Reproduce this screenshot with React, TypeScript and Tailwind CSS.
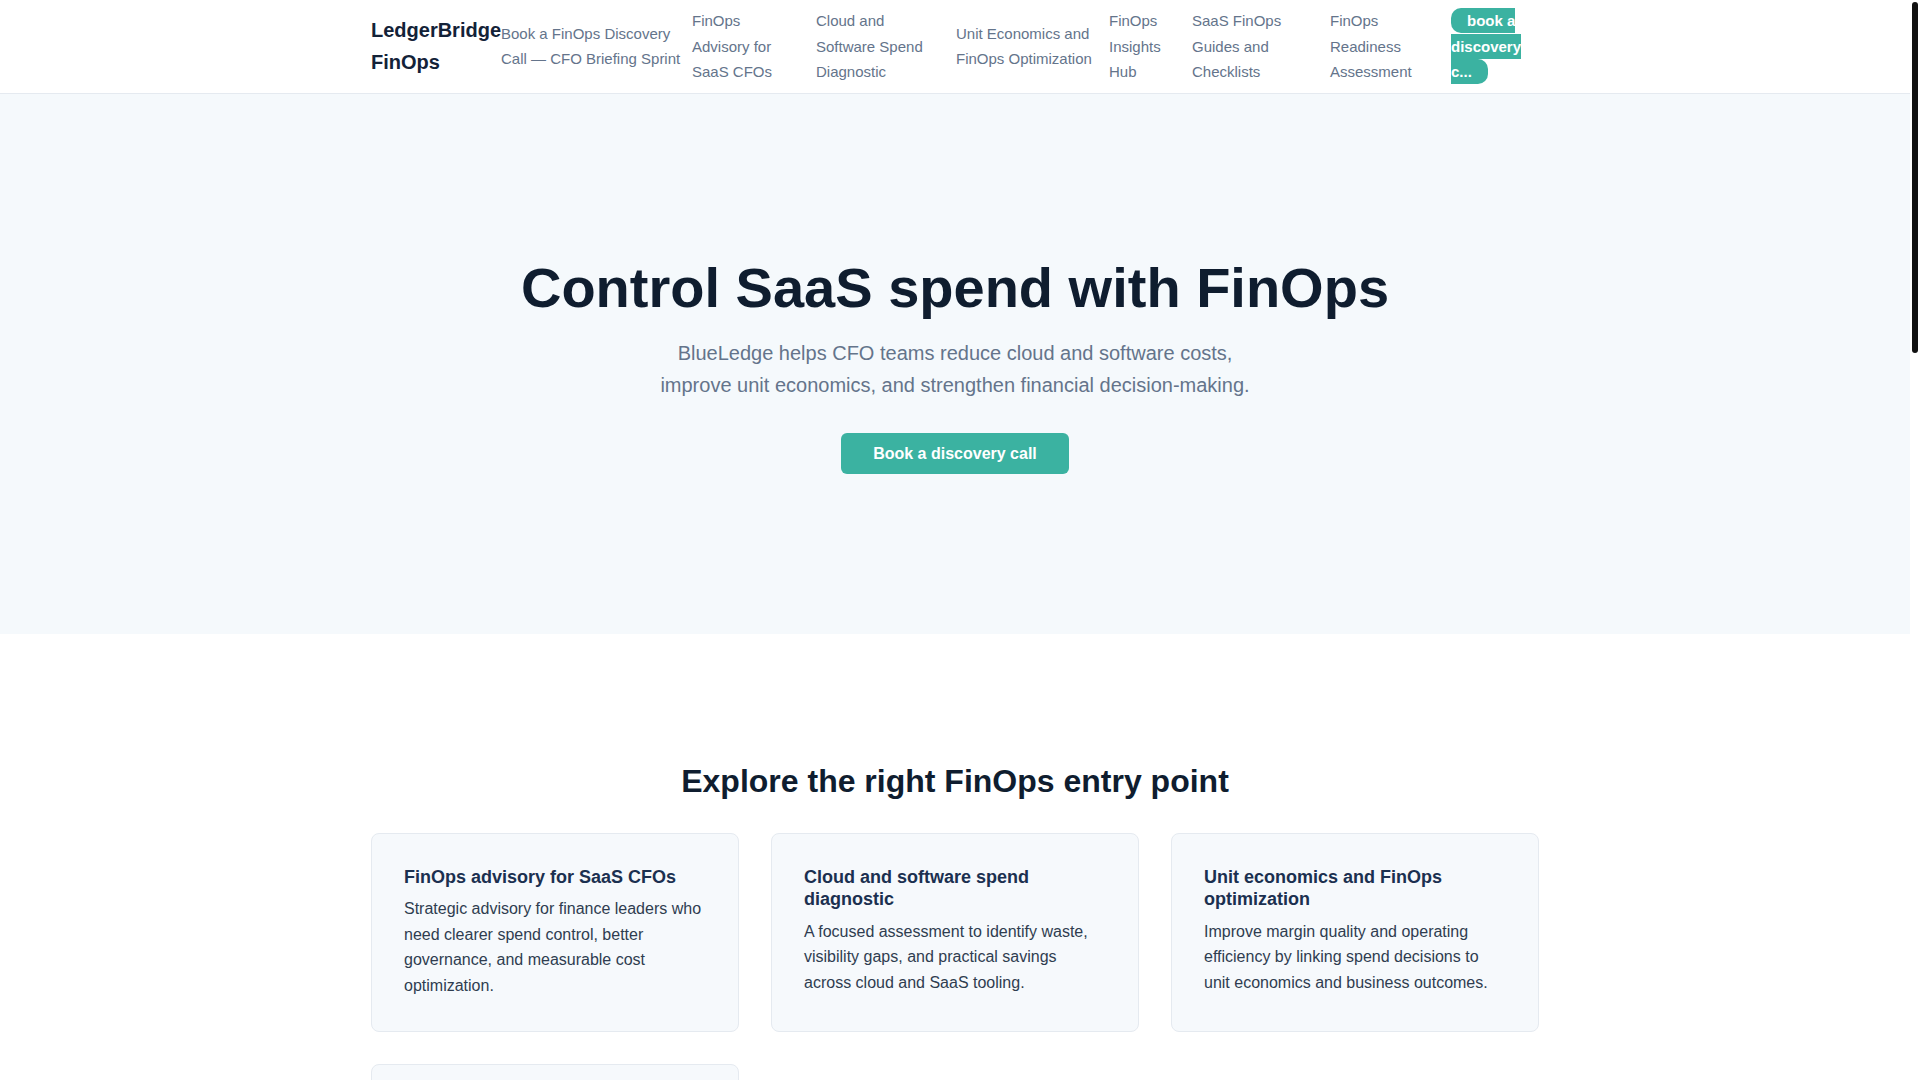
import React from "react";

const navItems = [
  { label: "Book a FinOps Discovery Call — CFO Briefing Sprint", cls: "w-[191px] pr-[10px]" },
  { label: "FinOps Advisory for SaaS CFOs", cls: "w-[124px] pr-[16px]" },
  { label: "Cloud and Software Spend Diagnostic", cls: "w-[140px] pr-[16px]" },
  { label: "Unit Economics and FinOps Optimization", cls: "w-[153px] pr-[16px]" },
  { label: "FinOps Insights Hub", cls: "w-[83px] pr-[16px]" },
  { label: "SaaS FinOps Guides and Checklists", cls: "w-[138px] pr-[16px]" },
  { label: "FinOps Readiness Assessment", cls: "w-[121px] pr-[16px]" },
];

const cards = [
  {
    title: "FinOps advisory for SaaS CFOs",
    body: "Strategic advisory for finance leaders who need clearer spend control, better governance, and measurable cost optimization.",
  },
  {
    title: "Cloud and software spend diagnostic",
    body: "A focused assessment to identify waste, visibility gaps, and practical savings across cloud and SaaS tooling.",
  },
  {
    title: "Unit economics and FinOps optimization",
    body: "Improve margin quality and operating efficiency by linking spend decisions to unit economics and business outcomes.",
  },
  {
    title: "FinOps insights hub",
    body: "Practical articles, benchmarks, and frameworks for CFO teams building a durable FinOps practice.",
  },
];

const steps = [
  {
    title: "Discovery call",
    body: "We review your current cloud and SaaS footprint, reporting cadence, and the decisions your finance team needs to make.",
  },
  {
    title: "Spend diagnostic",
    body: "We map spend to owners, products, and customers to surface waste, contract risk, and the biggest savings opportunities.",
  },
  {
    title: "Operating rhythm",
    body: "We help you set up budgets, forecasts, and unit-cost metrics so savings hold and spend stays accountable.",
  },
];

const faqs = [
  {
    q: "Who is a FinOps discovery call for?",
    a: "CFOs, VPs of Finance, and FP&A leaders at SaaS companies who want clearer visibility into cloud and software spend.",
  },
  {
    q: "How long does a spend diagnostic take?",
    a: "Most diagnostics take two to four weeks, depending on the number of vendors, cloud accounts, and data sources involved.",
  },
  {
    q: "Do we need a dedicated FinOps team?",
    a: "No. We help finance and engineering share ownership of spend with lightweight processes that fit your current team.",
  },
];

export default function App() {
  return (
    <div className="bg-white pr-[10px] font-['Liberation_Sans',Arial,sans-serif] text-[#2f3d50]">
      <div aria-hidden="true" className="pointer-events-none fixed right-0 top-0 z-50 h-screen w-[10px] bg-white">
        <div className="ml-[2px] mt-[2px] h-[351px] w-[6px] rounded-full bg-[#111111]" />
      </div>

      <header className="border-b border-[#e5eaf0] bg-white">
        <div className="mx-auto flex max-w-[1168px] items-center py-2">
          <a href="#" className="block w-[130px] shrink-0 text-[20px] font-bold leading-[1.6] text-[#132238]">
            LedgerBridge FinOps
          </a>
          <nav className="flex items-center">
            {navItems.map((item) => (
              <a
                key={item.label}
                href="#"
                className={`block shrink-0 text-[15px] leading-[1.7] text-[#64748b] ${item.cls}`}
              >
                {item.label}
              </a>
            ))}
            <div className="w-[88px] shrink-0 text-[15px] leading-[1.7]">
              <a href="#" className="rounded-[10px] bg-[#3bb2a1] px-4 py-1 font-bold text-white">
                book a discovery c...
              </a>
            </div>
          </nav>
        </div>
      </header>

      <main>
        <section className="bg-[#f5f9fc] py-[160px] text-center">
          <h1 className="text-[56px] font-bold leading-[1.2] text-[#0f1d2f]">
            Control SaaS spend with FinOps
          </h1>
          <p className="mx-auto mt-4 max-w-[620px] text-[20px] leading-[1.6] text-[#64748b]">
            BlueLedge helps CFO teams reduce cloud and software costs, improve unit economics, and strengthen financial decision-making.
          </p>
          <div className="mt-8 flex justify-center">
            <a
              href="#"
              className="block rounded-md bg-[#3bb2a1] px-8 py-2 text-[16px] font-bold leading-[1.6] text-white"
            >
              Book a discovery call
            </a>
          </div>
        </section>

        <section className="py-32">
          <div className="mx-auto max-w-[1168px]">
            <h2 className="mb-8 text-center text-[32px] font-bold leading-[1.2] text-[#0f1d2f]">
              Explore the right FinOps entry point
            </h2>
            <div className="grid grid-cols-3 gap-8">
              {cards.map((c) => (
                <div key={c.title} className="rounded-lg border border-[#e5eaf0] bg-[#f6f9fc] p-8">
                  <h3 className="mb-2 text-[18px] font-bold leading-[1.25] text-[#1b3050]">{c.title}</h3>
                  <p className="text-[16px] leading-[1.6] text-[#2f3d50]">{c.body}</p>
                </div>
              ))}
            </div>
          </div>
        </section>

        <section className="bg-[#f5f9fc] py-32">
          <div className="mx-auto max-w-[1168px]">
            <h2 className="mb-8 text-center text-[32px] font-bold leading-[1.2] text-[#0f1d2f]">
              How a FinOps engagement works
            </h2>
            <div className="grid grid-cols-3 gap-8">
              {steps.map((s, i) => (
                <div key={s.title} className="rounded-lg border border-[#e5eaf0] bg-white p-8">
                  <div className="mb-4 text-[14px] font-bold leading-[1.6] text-[#3bb2a1]">Step {i + 1}</div>
                  <h3 className="mb-2 text-[18px] font-bold leading-[1.25] text-[#1b3050]">{s.title}</h3>
                  <p className="text-[16px] leading-[1.6] text-[#2f3d50]">{s.body}</p>
                </div>
              ))}
            </div>
          </div>
        </section>

        <section className="py-32">
          <div className="mx-auto max-w-[800px]">
            <h2 className="mb-8 text-center text-[32px] font-bold leading-[1.2] text-[#0f1d2f]">
              Frequently asked questions
            </h2>
            <div className="flex flex-col gap-8">
              {faqs.map((f) => (
                <div key={f.q} className="rounded-lg border border-[#e5eaf0] bg-[#f6f9fc] p-6">
                  <h3 className="mb-2 text-[18px] font-bold leading-[1.25] text-[#1b3050]">{f.q}</h3>
                  <p className="text-[16px] leading-[1.6] text-[#2f3d50]">{f.a}</p>
                </div>
              ))}
            </div>
          </div>
        </section>

        <section className="bg-[#f5f9fc] py-32 text-center">
          <div className="mx-auto max-w-[720px]">
            <h2 className="mb-4 text-[32px] font-bold leading-[1.2] text-[#0f1d2f]">
              Ready to take control of SaaS spend?
            </h2>
            <p className="mb-8 text-[20px] leading-[1.6] text-[#64748b]">
              Book a discovery call and leave with a clear view of where your cloud and software budget goes.
            </p>
            <div className="flex justify-center">
              <a
                href="#"
                className="block rounded-md bg-[#3bb2a1] px-8 py-2 text-[16px] font-bold leading-[1.6] text-white"
              >
                Book a discovery call
              </a>
            </div>
          </div>
        </section>
      </main>

      <footer className="border-t border-[#e5eaf0] bg-white py-16">
        <div className="mx-auto flex max-w-[1168px] items-start justify-between">
          <div>
            <div className="text-[20px] font-bold leading-[1.6] text-[#132238]">LedgerBridge FinOps</div>
            <p className="mt-2 max-w-[360px] text-[15px] leading-[1.7] text-[#64748b]">
              FinOps advisory for SaaS CFOs and finance teams.
            </p>
          </div>
          <div className="flex flex-col gap-2 text-[15px] leading-[1.7] text-[#64748b]">
            <a href="#">FinOps Insights Hub</a>
            <a href="#">SaaS FinOps Guides and Checklists</a>
            <a href="#">FinOps Readiness Assessment</a>
          </div>
        </div>
        <div className="mx-auto mt-12 max-w-[1168px] text-[14px] leading-[1.6] text-[#94a3b8]">
          © 2024 LedgerBridge FinOps. All rights reserved.
        </div>
      </footer>
    </div>
  );
}
